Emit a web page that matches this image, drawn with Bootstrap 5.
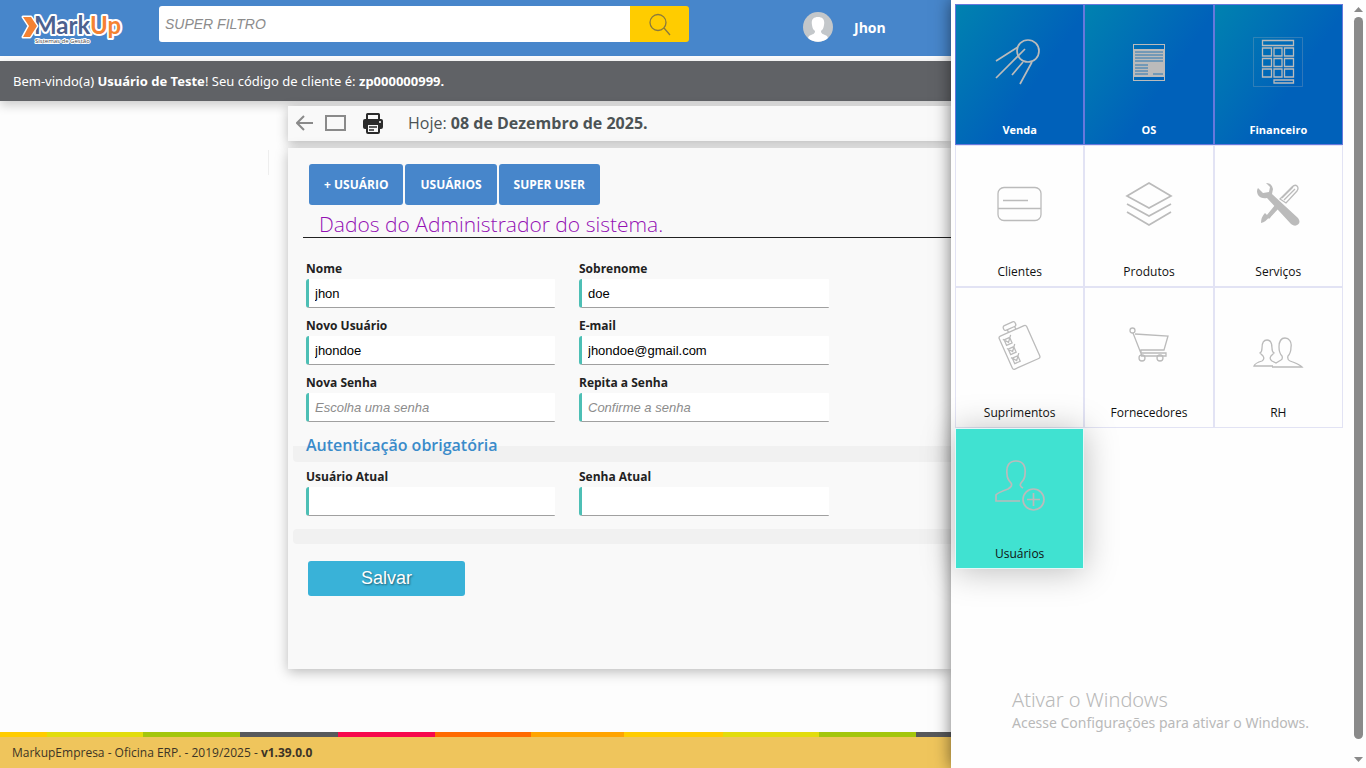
<!DOCTYPE html>
<html lang="pt-BR">
<head>
<meta charset="utf-8">
<meta name="viewport" content="width=device-width, initial-scale=1">
<title>MarkUp - Usuários</title>
<link href="https://cdn.jsdelivr.net/npm/bootstrap@5.3.0/dist/css/bootstrap.min.css" rel="stylesheet">
<style>
body{font-family:"Open Sans","Noto Sans",sans-serif;font-size:14px;color:#222;background:#fdfdfd}
.topbar{background:#4786cb;height:56px;margin-bottom:5px}
.logo-link{width:159px;padding:4px 0 0 20px}
.search-box{flex:0 1 530px;height:36px;margin-top:6px}
.search-box .form-control{font:italic 14px "Liberation Sans",sans-serif;border:0;border-radius:3px 0 0 3px;padding:0 6px}
.search-box .form-control::placeholder,.field::placeholder{color:#8c8c8c;font-style:italic}
.search-box .btn{background:#fc0;width:59px;border-radius:0 3px 3px 0;padding:0}
.user-link{margin-left:114px;gap:21px;padding-bottom:2px}
.welcome{background:#606266;height:40px;padding:2px 13px 0;box-shadow:0 4px 10px #0003;font-family:"Noto Sans","Open Sans",sans-serif;font-size:13px}
.side-rail{flex:0 0 269px;height:25px;margin-top:49px;border-right:1px solid #eee}
.work{margin:5px 0 0 19px;min-width:0}
.panel-box{background:#f9f9f9;box-shadow:0 3px 12px #0004}
.tools{height:35px;margin-bottom:7px;padding:0 8px 2px;color:#4c5355;font-size:16px}
.form-panel{height:521px;padding-top:16px}
.tabs-row{gap:2px;padding-left:21px}
.tabs-row .btn{background:#4786cb;color:#fff;font-size:12px;font-weight:700;height:41px;border-radius:3px;padding:0 14px}
.page-title{font-size:21px;font-weight:300;color:#9410b4;line-height:26px;margin:6px 0 24px 15px;padding-left:16px;border-bottom:1px solid #222}
.fields{display:grid;grid-template-columns:249px 250px;column-gap:24px;row-gap:11px;padding-left:18px}
.fields label{display:block;font-size:12px;font-weight:700;line-height:14px;margin-bottom:3px}
.field{display:block;width:100%;height:29px;border:0;border-left:3px solid #4dbfb5;border-bottom:1px solid #a0a0a0;border-radius:3px 1px 1px 3px;padding:0 6px;background:#fff;color:#000;font:13px "Liberation Sans",sans-serif;outline:0}
.auth-title{font-size:16px;font-weight:600;color:#3a8bca;line-height:18px;height:26px;margin:14px 0 8px 5px;padding-left:13px;background:linear-gradient(transparent 10px,#f1f1f1 10px);border-radius:0 0 0 4px}
.strip{height:15px;margin:13px 0 17px 5px;background:#f1f1f1;border-radius:4px 0 0 4px}
.btn-save{background:#39b2d8;color:#fff;width:157px;height:35px;margin-left:20px;border-radius:3px;padding:0;font:18px "Liberation Sans",sans-serif;text-shadow:1px 1px 2px #0007}
.btn-save:hover{background:#2fa5ca;color:#fff}
.rainbow{height:5px;background:linear-gradient(90deg,#fc0 99px,#e2dc0d 99px 195px,#a4c60d 195px 292px,#58595b 292px 390px,#f7084c 390px 487px,#ff6a00 487px 583px,#ffa400 583px) -52px 0/676px 5px repeat-x}
.foot{height:31px;background:#efc55c;font-size:12px;padding:0 12px;color:#3c3426}
.launcher{flex:0 0 415px;background:#fefefe;box-shadow:0 0 16px #0008;z-index:2}
.tiles{display:grid;grid-template-columns:repeat(3,1fr);grid-auto-rows:1fr;height:569px;padding:4px 7px 0 4px}
.tile{border:1px solid #e2e3f4;color:#111;text-decoration:none;font-size:12px;line-height:16px;padding:32px 0 6px}
.tile svg{width:50px;height:50px;fill:none;stroke:#bbb;stroke-width:1.7;overflow:visible}
.tile-blue{background:linear-gradient(125deg,#0082b0,#0061ba 60%);border-color:#6678dc;color:#fff;font-size:11px;font-weight:700}
.tile-active{background:#40e2d1;border-color:#e4f7f7;box-shadow:0 2px 32px #0004}
.activate{font-family:"Noto Sans",sans-serif;color:#b9b9b9;padding:0 0 35px 61px}
.activate .big-line{font-size:20px;line-height:26px;font-weight:300}
.activate .small-line{font-size:14px;line-height:20px}
.scroll-col{width:16px;padding:7px 3px 6px 4px}
.thumb{width:9px;background:#8a8a8a;border-radius:5px;margin:5px 0 18px}
</style>
</head>
<body>
<div class="d-flex min-vh-100 overflow-hidden">
  <div class="d-flex flex-column flex-grow-1 overflow-hidden">
    <header class="topbar d-flex flex-shrink-0">
      <a class="logo-link" href="#" aria-label="MarkUp Sistemas de Gestão">
        <svg class="d-block" width="116" height="48" viewBox="0 -8 116 48">
          <g stroke="#fff" stroke-width="4" stroke-linejoin="round" paint-order="stroke" font-family="Lato,sans-serif" font-weight="700">
            <text x="14" y="22" font-size="24" fill="#4c618f">Mark<tspan fill="#f58232">Up</tspan></text>
            <text x="15" y="31" font-size="6" font-family="Open Sans,sans-serif" font-weight="400" stroke-width="2" fill="#444">Sistemas de Gestão</text>
            <path d="M3 5h8l6 9-7 11H3l6-11z" fill="#f58232" stroke-width="3"/>
          </g>
        </svg>
      </a>
      <form class="search-box input-group flex-nowrap">
        <input class="form-control" type="search" placeholder="SUPER FILTRO" aria-label="Super filtro">
        <button class="btn" type="button" aria-label="Buscar">
          <svg width="24" height="24" viewBox="0 0 24 24" fill="none" stroke="#8a7a3c" stroke-width="1.3"><circle cx="10" cy="9.500" r="8"/><path d="M16 15l6 7"/></svg>
        </button>
      </form>
      <a href="#" class="user-link d-flex align-items-center fw-bold text-white text-decoration-none">
        <svg width="30" height="30" viewBox="0 0 30 30"><circle cx="15" cy="15" r="15" fill="#c3c7ca"/><path d="M15 5c5 0 7 3 6 8-.5 4-2 5-3 6 0 3 2 3 6 5l1 2a15 15 0 0 1-20 0l1-2c4-2 6-2 6-5-1-1-2.500-2-3-6-1-5 1-8 6-8z" fill="#fff"/></svg>
        <span>Jhon</span>
      </a>
    </header>
    <div class="welcome d-flex align-items-center flex-shrink-0 text-white text-nowrap"><span>Bem-vindo(a) <b>Usuário de Teste</b>! Seu código de cliente é: <b>zp000000999.</b></span></div>
    <div class="d-flex">
      <div class="side-rail"></div>
      <main class="work flex-grow-1">
        <div class="tools panel-box d-flex align-items-center">
          <a href="#" aria-label="Voltar"><svg class="d-block" width="17" height="16" fill="none" stroke="#8a8a8a" stroke-width="2"><path d="M17 8H1M8 1L1 8l7 7"/></svg></a>
          <a href="#" aria-label="Janela" class="ms-2 ps-1"><svg class="d-block" width="21" height="16" fill="none" stroke="#8a8a8a" stroke-width="2"><path d="M1 1h19v14H1z"/></svg></a>
          <a href="#" aria-label="Imprimir" class="ms-3"><svg class="d-block" width="22" height="22" viewBox="0 0 22 22"><path d="M5 7V2.500Q5 2 5.500 2h11q.5 0 .5.500V7" fill="none" stroke="#2b2b2b" stroke-width="2"/><rect x="1" y="7" width="20" height="10" rx="2" fill="#2b2b2b"/><rect x="5" y="12" width="12" height="9" rx="1" fill="#f9f9f9" stroke="#2b2b2b" stroke-width="2"/><path d="M7 15h8M7 18h5" stroke="#2b2b2b" stroke-width="1.500"/><circle cx="18" cy="10" r="1" fill="#fff"/></svg></a>
          <span class="ms-4 text-nowrap">Hoje: <b>08 de Dezembro de 2025.</b></span>
        </div>
        <form class="form-panel panel-box">
          <div class="tabs-row d-flex">
            <button type="button" class="btn">+ USUÁRIO</button>
            <button type="button" class="btn">USUÁRIOS</button>
            <button type="button" class="btn">SUPER USER</button>
          </div>
          <h1 class="page-title">Dados do Administrador do sistema.</h1>
          <div class="fields">
            <div><label for="nome">Nome</label><input id="nome" class="field" value="jhon"></div>
            <div><label for="sobrenome">Sobrenome</label><input id="sobrenome" class="field" value="doe"></div>
            <div><label for="usuario">Novo Usuário</label><input id="usuario" class="field" value="jhondoe"></div>
            <div><label for="email">E-mail</label><input id="email" type="email" class="field" value="jhondoe@gmail.com"></div>
            <div><label for="senha">Nova Senha</label><input id="senha" type="password" class="field" placeholder="Escolha uma senha"></div>
            <div><label for="senha2">Repita a Senha</label><input id="senha2" type="password" class="field" placeholder="Confirme a senha"></div>
          </div>
          <h2 class="auth-title">Autenticação obrigatória</h2>
          <div class="fields">
            <div><label for="atual">Usuário Atual</label><input id="atual" class="field"></div>
            <div><label for="senha-atual">Senha Atual</label><input id="senha-atual" type="password" class="field"></div>
          </div>
          <div class="strip"></div>
          <button type="button" class="btn btn-save">Salvar</button>
        </form>
      </main>
    </div>
    <footer class="mt-auto">
      <div class="rainbow"></div>
      <div class="foot d-flex align-items-center"><span>MarkupEmpresa - Oficina ERP. - 2019/2025 - <b>v1.39.0.0</b></span></div>
    </footer>
  </div>
  <aside class="launcher d-flex">
    <div class="d-flex flex-column flex-grow-1">
      <nav class="tiles" aria-label="Módulos">
        <a href="#" class="tile tile-blue d-flex flex-column align-items-center justify-content-between">
          <svg viewBox="0 0 50 50"><circle cx="33" cy="14" r="11"/><path d="M1 24l22-14M1 41l29-29M17 38l11-13M25 47l12-22"/></svg>Venda</a>
        <a href="#" class="tile tile-blue d-flex flex-column align-items-center justify-content-between">
          <svg viewBox="0 0 50 50"><rect x="9.500" y="7.500" width="31" height="36" stroke-width="1"/><path d="M10 12h30v28H10z" fill="#bbb" stroke="none"/><path d="M11 15h28M11 18h28M11 21h28M11 24h28M11 28h13M11 31h13M11 34h13M11 37h13M29 37h10" stroke="#2877b2" stroke-width="1"/></svg>OS</a>
        <a href="#" class="tile tile-blue d-flex flex-column align-items-center justify-content-between">
          <svg viewBox="0 0 50 50"><path d="M.5.5h49v49H.5z" stroke-width=".5" opacity=".5"/><path d="M9.500 3.500h31v5h-31zM9.500 11h9v8h-9zM21 11h8v8h-8zM31.500 11h9v8h-9zM9.500 21.500h9v8h-9zM21 21.500h8v8h-8zM31.500 21.500h9v8h-9zM9.500 32h9v8h-9zM21 32h8v8h-8zM31.500 32h9v8h-9zM21 43h19.500v3H21z" stroke-width="1.300"/></svg>Financeiro</a>
        <a href="#" class="tile d-flex flex-column align-items-center justify-content-between">
          <svg viewBox="0 0 50 50"><rect x="3" y="9.500" width="43" height="33" rx="6" stroke-width="1.300"/><path d="M3 30.500h43M8 22.500h25" stroke-width="1.300"/></svg>Clientes</a>
        <a href="#" class="tile d-flex flex-column align-items-center justify-content-between">
          <svg viewBox="0 0 50 50"><path d="M25 5l22 13-22 12L3 18zM3 26l22 12 22-12M3 34l22 13 22-13"/></svg>Produtos</a>
        <a href="#" class="tile d-flex flex-column align-items-center justify-content-between">
          <svg viewBox="0 0 50 50"><g stroke-width="1.300"><path d="M27 21L39 9q3-3 5-1t0 5L33 25zM31 22l11-11M29 20L40 9"/><path d="M22 28l3 2-9 10-2-2z" fill="#bbb"/><path d="M12 35l4 4q-3 5-8 6 0-6 4-10z" fill="#bbb" stroke="none"/><path d="M13 5q6 0 7 6l-1 5 26 24q3 4 0 6.500t-7-.5L14 20q-6 1-9-3-2-4 0-7l5 5 6-1 1-5z" fill="#bbb" stroke="none"/></g></svg>Serviços</a>
        <a href="#" class="tile d-flex flex-column align-items-center justify-content-between">
          <svg viewBox="0 0 50 50"><g transform="rotate(-24 25 26)" stroke-width="1.300"><rect x="9" y="9" width="30" height="36" rx="2"/><rect x="17" y="1" width="13" height="5" rx="2"/><path d="M20 6v3M28 6v3M13 14h6v6h-6zM13 24h6v6h-6zM13 34h6v6h-6zM12 13l4 5 5-6M12 23l4 5 5-6M12 33l4 5 5-6"/></g></svg>Suprimentos</a>
        <a href="#" class="tile d-flex flex-column align-items-center justify-content-between">
          <svg viewBox="0 0 50 50"><g stroke-width="1.300"><circle cx="8.500" cy="10.500" r="2.500"/><path d="M9 13l9 23M11 14l33 2-4 14H17v3h25v3H17"/><circle cx="18" cy="38" r="3"/><circle cx="36" cy="38" r="3"/></g></svg>Fornecedores</a>
        <a href="#" class="tile d-flex flex-column align-items-center justify-content-between">
          <svg viewBox="0 0 50 50"><path stroke-width="1.300" d="M20 46H1q1-3 8-5 3-2 1-5l-3-3q2-1 2-5c0-6 2-8 5-8s5 2 5 8q0 4 2 5l-3 3q-2 3 1 5l4 2 5-3q2-1 1-4-3-3-3-9c0-5 2-9 6-9s7 4 6 9q0 6-3 9-1 4 2 5 9 3 12 6H19"/></svg>RH</a>
        <a href="#" class="tile tile-active d-flex flex-column align-items-center justify-content-between">
          <svg viewBox="0 0 50 50"><path d="M25 40H1v-6q1-2 12-6 5-3 3-6-4-4-4-9C11 5 14 0 21 0s10 5 9 13q0 5-4 9-2 3 2 5"/><circle cx="38.500" cy="38.500" r="10.500"/><path d="M38.500 32v13M32 38.500h13"/></svg>Usuários</a>
      </nav>
      <div class="activate mt-auto">
        <div class="big-line">Ativar o Windows</div>
        <div class="small-line">Acesse Configurações para ativar o Windows.</div>
      </div>
    </div>
    <div class="scroll-col d-flex flex-column" aria-hidden="true">
      <svg width="9" height="5"><path d="M0 5l4.500-5L9 5z" fill="#8a8a8a"/></svg>
      <div class="thumb flex-grow-1"></div>
      <svg width="9" height="5"><path d="M0 0l4.500 5L9 0z" fill="#8a8a8a"/></svg>
    </div>
  </aside>
</div>
<script src="https://cdn.jsdelivr.net/npm/bootstrap@5.3.0/dist/js/bootstrap.bundle.min.js"></script>
</body>
</html>
